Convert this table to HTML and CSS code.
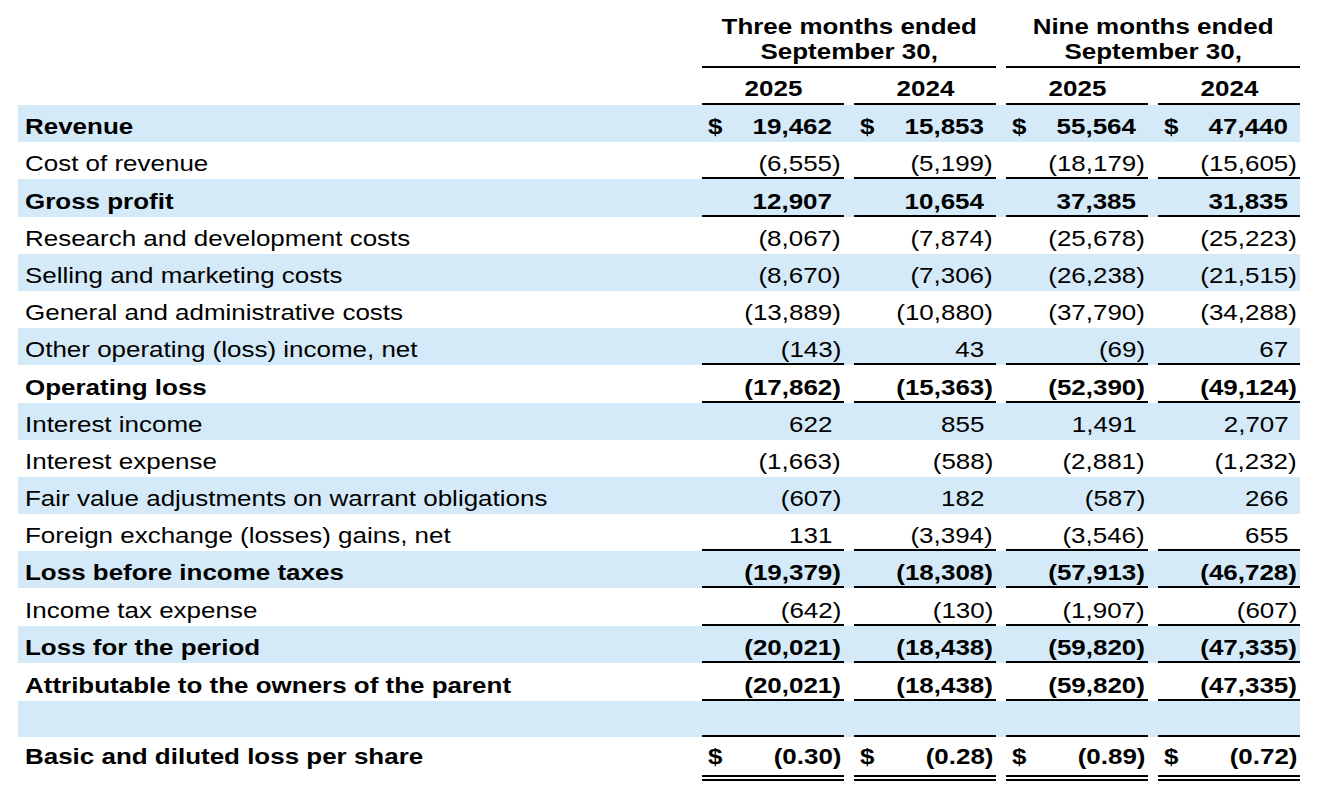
FILE: index.html
```html
<!DOCTYPE html>
<html lang="en">
<head>
<meta charset="utf-8">
<title>Condensed Consolidated Statements of Operations</title>
<link rel="stylesheet" href="styles.css">
</head>
<body>
<div class="statement">
  <div class="grid periods">
    <div></div>
    <div class="period"><span class="s m">Three months ended</span><span class="s m">September 30,</span></div>
    <div class="period"><span class="s m">Nine months ended</span><span class="s m">September 30,</span></div>
  </div>
  <div class="grid years">
    <div></div>
    <div class="yr"><span class="s m">2025</span></div>
    <div class="yr"><span class="s m">2024</span></div>
    <div class="yr"><span class="s m">2025</span></div>
    <div class="yr"><span class="s m">2024</span></div>
  </div>

  <div class="grid row shade bold">
    <div class="c lbl"><span class="s">Revenue</span></div>
    <div class="c num"><span class="s">$</span><span class="s r">19,462<i>)</i></span></div>
    <div class="c num"><span class="s">$</span><span class="s r">15,853<i>)</i></span></div>
    <div class="c num"><span class="s">$</span><span class="s r">55,564<i>)</i></span></div>
    <div class="c num"><span class="s">$</span><span class="s r">47,440<i>)</i></span></div>
  </div>
  <div class="grid row ul">
    <div class="c lbl"><span class="s">Cost of revenue</span></div>
    <div class="c num"><span class="s r">(6,555)</span></div>
    <div class="c num"><span class="s r">(5,199)</span></div>
    <div class="c num"><span class="s r">(18,179)</span></div>
    <div class="c num"><span class="s r">(15,605)</span></div>
  </div>
  <div class="grid row shade bold ul">
    <div class="c lbl"><span class="s">Gross profit</span></div>
    <div class="c num"><span class="s r">12,907<i>)</i></span></div>
    <div class="c num"><span class="s r">10,654<i>)</i></span></div>
    <div class="c num"><span class="s r">37,385<i>)</i></span></div>
    <div class="c num"><span class="s r">31,835<i>)</i></span></div>
  </div>
  <div class="grid row">
    <div class="c lbl"><span class="s">Research and development costs</span></div>
    <div class="c num"><span class="s r">(8,067)</span></div>
    <div class="c num"><span class="s r">(7,874)</span></div>
    <div class="c num"><span class="s r">(25,678)</span></div>
    <div class="c num"><span class="s r">(25,223)</span></div>
  </div>
  <div class="grid row shade">
    <div class="c lbl"><span class="s">Selling and marketing costs</span></div>
    <div class="c num"><span class="s r">(8,670)</span></div>
    <div class="c num"><span class="s r">(7,306)</span></div>
    <div class="c num"><span class="s r">(26,238)</span></div>
    <div class="c num"><span class="s r">(21,515)</span></div>
  </div>
  <div class="grid row">
    <div class="c lbl"><span class="s">General and administrative costs</span></div>
    <div class="c num"><span class="s r">(13,889)</span></div>
    <div class="c num"><span class="s r">(10,880)</span></div>
    <div class="c num"><span class="s r">(37,790)</span></div>
    <div class="c num"><span class="s r">(34,288)</span></div>
  </div>
  <div class="grid row shade ul">
    <div class="c lbl"><span class="s">Other operating (loss) income, net</span></div>
    <div class="c num"><span class="s r">(143)</span></div>
    <div class="c num"><span class="s r">43<i>)</i></span></div>
    <div class="c num"><span class="s r">(69)</span></div>
    <div class="c num"><span class="s r">67<i>)</i></span></div>
  </div>
  <div class="grid row bold ul">
    <div class="c lbl"><span class="s">Operating loss</span></div>
    <div class="c num"><span class="s r">(17,862)</span></div>
    <div class="c num"><span class="s r">(15,363)</span></div>
    <div class="c num"><span class="s r">(52,390)</span></div>
    <div class="c num"><span class="s r">(49,124)</span></div>
  </div>
  <div class="grid row shade">
    <div class="c lbl"><span class="s">Interest income</span></div>
    <div class="c num"><span class="s r">622<i>)</i></span></div>
    <div class="c num"><span class="s r">855<i>)</i></span></div>
    <div class="c num"><span class="s r">1,491<i>)</i></span></div>
    <div class="c num"><span class="s r">2,707<i>)</i></span></div>
  </div>
  <div class="grid row">
    <div class="c lbl"><span class="s">Interest expense</span></div>
    <div class="c num"><span class="s r">(1,663)</span></div>
    <div class="c num"><span class="s r">(588)</span></div>
    <div class="c num"><span class="s r">(2,881)</span></div>
    <div class="c num"><span class="s r">(1,232)</span></div>
  </div>
  <div class="grid row shade">
    <div class="c lbl"><span class="s">Fair value adjustments on warrant obligations</span></div>
    <div class="c num"><span class="s r">(607)</span></div>
    <div class="c num"><span class="s r">182<i>)</i></span></div>
    <div class="c num"><span class="s r">(587)</span></div>
    <div class="c num"><span class="s r">266<i>)</i></span></div>
  </div>
  <div class="grid row ul">
    <div class="c lbl"><span class="s">Foreign exchange (losses) gains, net</span></div>
    <div class="c num"><span class="s r">131<i>)</i></span></div>
    <div class="c num"><span class="s r">(3,394)</span></div>
    <div class="c num"><span class="s r">(3,546)</span></div>
    <div class="c num"><span class="s r">655<i>)</i></span></div>
  </div>
  <div class="grid row shade bold ul">
    <div class="c lbl"><span class="s">Loss before income taxes</span></div>
    <div class="c num"><span class="s r">(19,379)</span></div>
    <div class="c num"><span class="s r">(18,308)</span></div>
    <div class="c num"><span class="s r">(57,913)</span></div>
    <div class="c num"><span class="s r">(46,728)</span></div>
  </div>
  <div class="grid row ul">
    <div class="c lbl"><span class="s">Income tax expense</span></div>
    <div class="c num"><span class="s r">(642)</span></div>
    <div class="c num"><span class="s r">(130)</span></div>
    <div class="c num"><span class="s r">(1,907)</span></div>
    <div class="c num"><span class="s r">(607)</span></div>
  </div>
  <div class="grid row shade bold ul">
    <div class="c lbl"><span class="s">Loss for the period</span></div>
    <div class="c num"><span class="s r">(20,021)</span></div>
    <div class="c num"><span class="s r">(18,438)</span></div>
    <div class="c num"><span class="s r">(59,820)</span></div>
    <div class="c num"><span class="s r">(47,335)</span></div>
  </div>
  <div class="grid row bold ul tall">
    <div class="c lbl"><span class="s">Attributable to the owners of the parent</span></div>
    <div class="c num"><span class="s r">(20,021)</span></div>
    <div class="c num"><span class="s r">(18,438)</span></div>
    <div class="c num"><span class="s r">(59,820)</span></div>
    <div class="c num"><span class="s r">(47,335)</span></div>
  </div>
  <div class="grid row shade ul short">
    <div class="c lbl"></div>
    <div class="c num"></div>
    <div class="c num"></div>
    <div class="c num"></div>
    <div class="c num"></div>
  </div>
  <div class="grid row bold basic">
    <div class="c lbl"><span class="s">Basic and diluted loss per share</span></div>
    <div class="c num"><span class="s">$</span><span class="s r">(0.30)</span></div>
    <div class="c num"><span class="s">$</span><span class="s r">(0.28)</span></div>
    <div class="c num"><span class="s">$</span><span class="s r">(0.89)</span></div>
    <div class="c num"><span class="s">$</span><span class="s r">(0.72)</span></div>
  </div>
</div>
</body>
</html>
```

FILE: styles.css
```css
html, body {
  margin: 0;
  padding: 0;
  background: #ffffff;
}

body {
  font-family: "Liberation Sans", Arial, Helvetica, sans-serif;
  font-size: 22px;
  color: #000000;
}

.statement {
  margin-left: 18px;
  width: 1282px;
}

.grid {
  display: grid;
  grid-template-columns: 674px repeat(4, 142px);
  column-gap: 10px;
}

/* the source typesetting is a horizontally widened Arial */
.s {
  display: inline-block;
  white-space: nowrap;
  transform: scaleX(1.18);
  transform-origin: left center;
}
.s.r { transform-origin: right center; }
.s.m { transform-origin: center center; }
.s i {
  font-style: normal;
  visibility: hidden;
}

/* header */
.periods {
  height: 68px;
}
.period {
  grid-column: span 2;
  box-sizing: border-box;
  border-bottom: 2px solid #000;
  display: flex;
  flex-direction: column;
  justify-content: flex-end;
  align-items: center;
  gap: 3px;
  font-weight: bold;
  line-height: 22px;
  padding-bottom: 3px;
}

.years {
  height: 37px;
}
.yr {
  box-sizing: border-box;
  border-bottom: 2px solid #000;
  display: flex;
  align-items: flex-end;
  justify-content: center;
  font-weight: bold;
  line-height: 24px;
  padding-bottom: 2px;
}

/* body rows */
.row {
  height: 37.2px;
}
.row.tall { height: 38px; }
.row.short { height: 36px; }
.shade {
  background: #d4eaf8;
}
.bold {
  font-weight: bold;
}

.c {
  box-sizing: border-box;
  display: flex;
  align-items: flex-end;
  line-height: 24px;
  padding-bottom: 3px;
}
.lbl {
  padding-left: 7px;
}
.num {
  justify-content: space-between;
  padding-left: 6px;
  padding-right: 3px;
}
.num .r:only-child {
  margin-left: auto;
}

.ul .num {
  border-bottom: 2px solid #000;
  padding-bottom: 1px;
}

.basic {
  height: 44px;
}
.basic .lbl {
  padding-bottom: 12px;
}
.basic .num {
  border-bottom: 6px double #000;
  padding-bottom: 6px;
}
```
